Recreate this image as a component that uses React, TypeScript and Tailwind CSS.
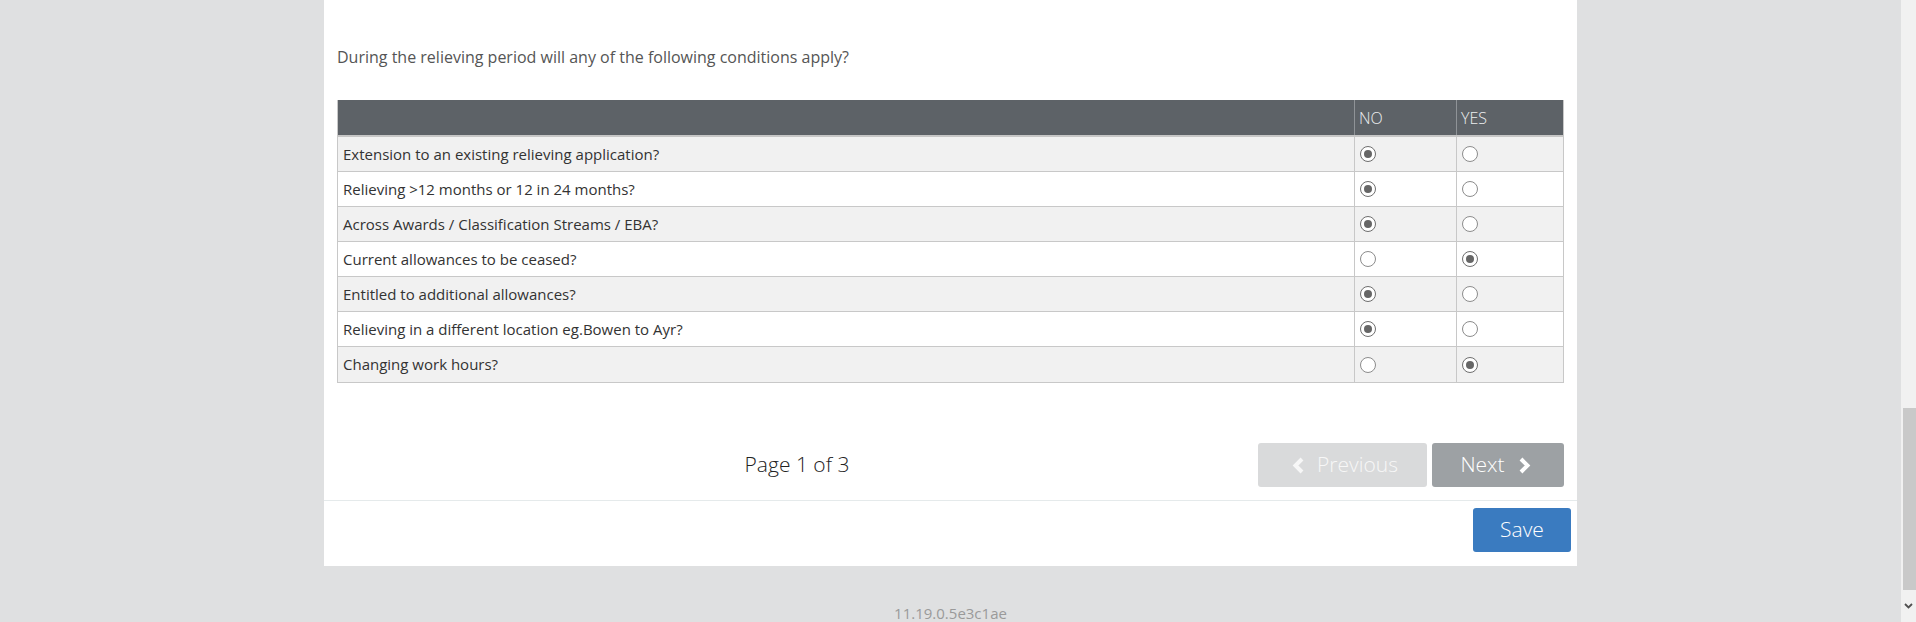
interface Condition {
  label: string
  answer: 'no' | 'yes'
}

const conditions: Condition[] = [
  { label: 'Extension to an existing relieving application?', answer: 'no' },
  { label: 'Relieving >12 months or 12 in 24 months?', answer: 'no' },
  { label: 'Across Awards / Classification Streams / EBA?', answer: 'no' },
  { label: 'Current allowances to be ceased?', answer: 'yes' },
  { label: 'Entitled to additional allowances?', answer: 'no' },
  { label: 'Relieving in a different location eg.Bowen to Ayr?', answer: 'no' },
  { label: 'Changing work hours?', answer: 'yes' },
]

function Radio({ checked }: { checked: boolean }) {
  return (
    <span
      className={`flex h-[16px] w-[16px] items-center justify-center rounded-full border bg-white ${
        checked ? 'border-[#6e6e6e]' : 'border-[#8c8c8c]'
      }`}
    >
      {checked && <span className="h-[8px] w-[8px] rounded-full bg-[#666]" />}
    </span>
  )
}

function Chevron({ dir }: { dir: 'left' | 'right' }) {
  return (
    <svg width="14" height="17" viewBox="0 0 14 17" aria-hidden="true">
      <path
        d={dir === 'left' ? 'M11 2L4.5 8.5L11 15' : 'M3 2L9.5 8.5L3 15'}
        stroke="currentColor"
        strokeWidth="4"
        fill="none"
      />
    </svg>
  )
}

export default function App() {
  return (
    <div className="flex h-[622px] w-full overflow-hidden bg-[#dfe0e1] font-['Open_Sans',sans-serif]">
      <div className="flex flex-1 flex-col items-center">
        <div className="w-[1253px] bg-white">
          <div className="px-[13px] pt-[46px]">
            <p className="text-[16px] leading-[22px] text-[#555]">
              During the relieving period will any of the following conditions apply?
            </p>

            {/* Conditions table */}
            <div className="mt-[32px] border-x border-b border-[#c8c8c8] text-[15px]">
              <div className="grid h-[37px] grid-cols-[1016px_102px_1fr] border-b-2 border-[#c6c6c6] bg-[#5d6267] font-light text-[#eceeef]">
                <div />
                <div className="flex items-center border-l border-[#8f9397] pl-[4px] text-[16px]">NO</div>
                <div className="flex items-center border-l border-[#8f9397] pl-[4px] text-[16px]">YES</div>
              </div>
              {conditions.map((c, i) => (
                <div
                  key={c.label}
                  className={`grid h-[35px] grid-cols-[1016px_102px_1fr] text-[#333] ${
                    i < conditions.length - 1 ? 'border-b border-[#c8c8c8]' : ''
                  } ${i % 2 === 0 ? 'bg-[#f1f1f1]' : 'bg-white'}`}
                >
                  <div className="flex items-center pl-[5px]">{c.label}</div>
                  <div className="flex items-center border-l border-[#c8c8c8] pl-[5px]">
                    <Radio checked={c.answer === 'no'} />
                  </div>
                  <div className="flex items-center border-l border-[#c8c8c8] pl-[5px]">
                    <Radio checked={c.answer === 'yes'} />
                  </div>
                </div>
              ))}
            </div>

            {/* Pager */}
            <div className="mt-[60px] grid grid-cols-[920px_1fr] items-center">
              <div className="text-center text-[21px] font-light text-[#222]">Page 1 of 3</div>
              <div className="flex justify-end gap-[5px]">
                <button className="flex h-[44px] w-[169px] items-center justify-center gap-[12px] rounded-[3px] bg-[#d9dadb] pl-[4px] text-[21px] font-light text-[#f7f7f7]">
                  <Chevron dir="left" />
                  Previous
                </button>
                <button className="flex h-[44px] w-[132px] items-center justify-center gap-[13px] rounded-[3px] bg-[#9da1a4] pr-[4px] text-[21px] font-light text-white">
                  Next
                  <Chevron dir="right" />
                </button>
              </div>
            </div>
          </div>

          <div className="mt-[13px] flex justify-end border-t border-[#e5eaeb] pt-[7px] pr-[6px] pb-[14px]">
            <button className="h-[44px] w-[98px] rounded-[3px] bg-[#3a7bc0] text-[21px] font-light text-white">
              Save
            </button>
          </div>
        </div>

        <p className="mt-[37px] text-[15px] leading-[20px] text-[#9a9a9a]">11.19.0.5e3c1ae</p>
      </div>

      {/* Browser scrollbar */}
      <div className="flex w-[15px] flex-col bg-[#f1f1f1]">
        <div className="h-[408px]" />
        <div className="ml-[2px] h-[182px] bg-[#c9c9c9]" />
        <div className="flex flex-1 items-center justify-center">
          <svg width="9" height="6" viewBox="0 0 9 6" aria-hidden="true">
            <path d="M1 1l3.5 3.5L8 1" stroke="#505050" strokeWidth="1.8" fill="none" />
          </svg>
        </div>
      </div>
    </div>
  )
}
